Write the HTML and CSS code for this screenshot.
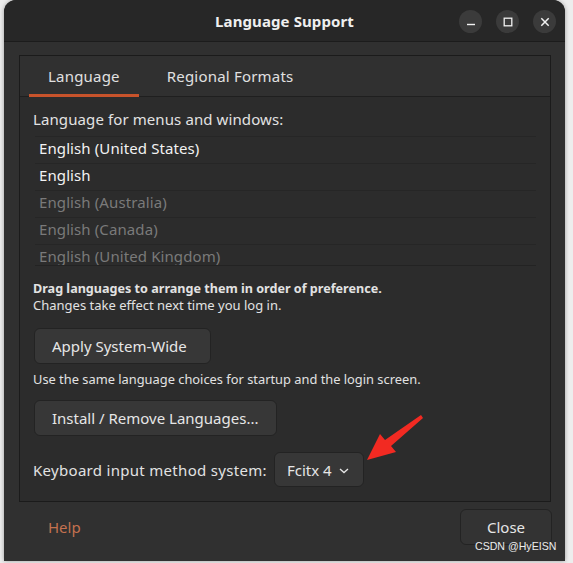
FILE: index.html
```html
<!DOCTYPE html>
<html lang="en">
<head>
<meta charset="utf-8">
<title>Language Support</title>
<link rel="stylesheet" href="styles.css">
</head>
<body>
<div class="window">
  <header class="titlebar">
    <div class="title">Language Support</div>
    <div class="wm-buttons">
      <span class="wm-btn"><svg width="10" height="10" viewBox="0 0 10 10"><path d="M1 7.5H9" stroke="#f2f2f2" stroke-width="1.4"/></svg></span>
      <span class="wm-btn"><svg width="10" height="10" viewBox="0 0 10 10"><rect x="1.2" y="1.2" width="7.6" height="7.6" fill="none" stroke="#f2f2f2" stroke-width="1.3"/></svg></span>
      <span class="wm-btn"><svg width="10" height="10" viewBox="0 0 10 10"><path d="M1.3 1.3L8.7 8.7M8.7 1.3L1.3 8.7" stroke="#f2f2f2" stroke-width="1.5"/></svg></span>
    </div>
  </header>

  <main class="content">
    <section class="notebook">
      <nav class="tabs">
        <span class="tab active">Language</span>
        <span class="tab">Regional Formats</span>
      </nav>
      <div class="page">
        <div class="label">Language for menus and windows:</div>
        <div class="list">
          <div class="row">English (United States)</div>
          <div class="row">English</div>
          <div class="row dim">English (Australia)</div>
          <div class="row dim">English (Canada)</div>
          <div class="row dim">English (United Kingdom)</div>
        </div>
        <div class="hint">
          <div class="hint-bold">Drag languages to arrange them in order of preference.</div>
          <div>Changes take effect next time you log in.</div>
        </div>
        <button class="btn btn-apply">Apply System-Wide</button>
        <div class="small">Use the same language choices for startup and the login screen.</div>
        <button class="btn btn-install">Install / Remove Languages...</button>
        <div class="im-row">
          <span class="im-label">Keyboard input method system:</span>
          <button class="btn dropdown">Fcitx 4 <svg class="chev" width="10" height="6" viewBox="0 0 10 6"><path d="M1 1L5 4.6L9 1" fill="none" stroke="#e6e6e6" stroke-width="1.3"/></svg></button>
        </div>
      </div>
    </section>
    <footer class="actions">
      <button class="flat help">Help</button>
      <button class="btn close">Close</button>
    </footer>
  </main>

  <svg class="arrow" width="80" height="60" viewBox="0 0 80 60">
    <path d="M56 1 L58 4 L26 32 L31 38 L2 46 L15 20 L20 26 Z" fill="#f22a22"/>
  </svg>
  <div class="watermark">CSDN @HyEISN</div>
</div>
</body>
</html>
```

FILE: styles.css
```css
* { box-sizing: border-box; }
html, body { margin: 0; padding: 0; }
body {
  background: #ededed;
  width: 573px;
  height: 563px;
  overflow: hidden;
  font-family: "Noto Sans", "Open Sans", sans-serif;
  color: #e4e4e4;
}
.window {
  position: relative;
  margin-left: 4px;
  width: 561px;
  height: 561px;
  background: #303030;
  border-radius: 12px 12px 0 0;
  box-shadow: 0 0 4px rgba(0,0,0,0.35);
  overflow: hidden;
  display: flex;
  flex-direction: column;
}
.titlebar {
  height: 42px;
  flex: none;
  background: #272727;
  border-bottom: 1px solid #1c1c1c;
  display: flex;
  align-items: center;
  justify-content: center;
  position: relative;
}
.title {
  font-weight: bold;
  font-size: 15px;
  color: #efefef;
  letter-spacing: 0.1px;
}
.wm-buttons {
  position: absolute;
  right: 9px;
  top: 10px;
  display: flex;
  gap: 14px;
}
.wm-btn {
  width: 23px;
  height: 23px;
  border-radius: 50%;
  background: #3b3b3b;
  display: flex;
  align-items: center;
  justify-content: center;
}
.content {
  flex: 1;
  display: flex;
  flex-direction: column;
  padding: 13px 14px 0 15px;
}
.notebook {
  border: 1px solid #1b1b1b;
  background: #2c2c2c;
  display: flex;
  flex-direction: column;
}
.tabs {
  height: 41px;
  background: #303030;
  border-bottom: 1px solid #1f1f1f;
  display: flex;
  padding-left: 9px;
}
.tab {
  padding: 0 19px;
  display: flex;
  align-items: center;
  font-size: 15px;
  letter-spacing: 0.2px;
  color: #e0e0e0;
  border-bottom: 3px solid transparent;
  padding-top: 1px;
  margin-bottom: -1px;
}
.tab + .tab { margin-left: 9px; }
.tab.active { border-bottom-color: #c8532b; }
.page {
  padding: 12px 14px 14px 13px;
  display: flex;
  flex-direction: column;
  align-items: flex-start;
}
.label {
  font-size: 15px;
  letter-spacing: 0.1px;
  line-height: 20px;
  color: #e2e2e2;
}
.list {
  align-self: stretch;
  margin: 7px 0 0 2px;
  height: 130px;
  overflow: hidden;
  border-top: 1px solid #262626;
  border-bottom: 1px solid #232323;
}
.row {
  height: 27px;
  border-bottom: 1px solid #262626;
  padding-left: 4px;
  font-size: 15px;
  letter-spacing: 0.1px;
  line-height: 23px;
  color: #f2f2f2;
}
.row.dim { color: #7a7a7a; }
.hint {
  margin-top: 15px;
  font-size: 13px;
  line-height: 16px;
  color: #e2e2e2;
}
.hint-bold { font-weight: bold; font-size: 12.6px; }
.btn {
  font-family: inherit;
  font-size: 15px;
  color: #e6e6e6;
  background: #373737;
  border: 1px solid #232323;
  border-radius: 6px;
  height: 36px;
  padding: 0 17px;
  margin: 0;
  display: flex;
  align-items: center;
  white-space: nowrap;
}
.btn-apply { margin: 15px 0 0 1px; width: 177px; }
.small {
  margin-top: 7px;
  font-size: 12.85px;
  line-height: 16px;
  color: #e2e2e2;
}
.btn-install { margin: 13px 0 0 1px; width: 243px; }
.im-row {
  margin-top: 16px;
  display: flex;
  align-items: center;
  gap: 10px;
}
.im-label {
  font-size: 15px;
  letter-spacing: 0.3px;
  color: #e2e2e2;
  width: 231px;
  white-space: nowrap;
}
.dropdown {
  height: 35px;
  width: 90px;
  padding: 0 12px;
  gap: 7px;
}
.chev { margin-top: 2px; }
.actions {
  display: flex;
  justify-content: space-between;
  align-items: center;
  padding-top: 7px;
}
.flat {
  font-family: inherit;
  font-size: 15px;
  background: none;
  border: none;
  height: 36px;
  padding: 0 0 0 15px;
  margin-left: 14px;
}
.help { color: #c4714f; }
.close {
  width: 92px;
  justify-content: center;
  margin-right: -1px;
  background: #333333;
}
.arrow {
  position: absolute;
  left: 361px;
  top: 414px;
}
.watermark {
  position: absolute;
  left: 471px;
  top: 539px;
  font-family: "Liberation Sans", sans-serif;
  font-size: 10.6px;
  line-height: 14px;
  color: #ececec;
  white-space: nowrap;
}
```
